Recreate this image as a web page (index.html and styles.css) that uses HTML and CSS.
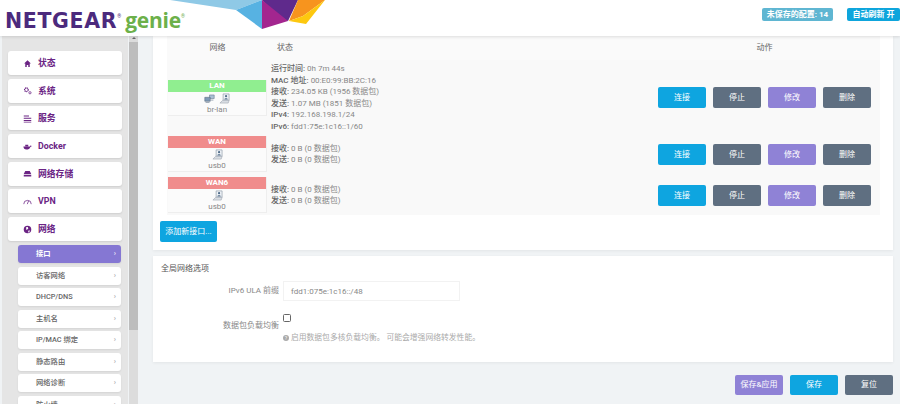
FILE: index.html
```html
<!DOCTYPE html>
<html lang="zh">
<head>
<meta charset="utf-8">
<title>NETGEAR genie</title>
<link rel="stylesheet" href="styles.css">
</head>
<body>
<svg width="0" height="0" class="defs">
  <symbol id="eth" viewBox="0 0 12 12">
    <path d="M4.500 1h6.500v7H4.500z" fill="#eef2f6" stroke="#8a97a6" stroke-width=".7"/>
    <circle cx="7.700" cy="3.500" r="1.200" fill="#4f6b88"/>
    <path d="M5.800 7.200c0-1.900 3.800-1.900 3.800 0z" fill="#4f6b88"/>
    <path d="M1 11l3-3h7l-1 3z" fill="#d8dde3" stroke="#98a2ad" stroke-width=".6"/>
  </symbol>
  <symbol id="br" viewBox="0 0 14 12">
    <path d="M7 1.500h6v4.500H7z" fill="#a9bfd5" stroke="#66788c" stroke-width=".7"/>
    <path d="M1 4.500h7v5H1z" fill="#7f9ab6" stroke="#56677b" stroke-width=".7"/>
    <path d="M2 11h5" stroke="#66788c" stroke-width=".8"/>
    <path d="M9 8h3" stroke="#66788c" stroke-width=".8"/>
  </symbol>
</svg>
<header class="top">
  <div class="logo"><span class="brand">NETGEAR</span><sup class="reg">®</sup><span class="genie">genie</span><sup class="reg green">®</sup></div>
  <svg class="shards" width="180" height="36" viewBox="160 0 180 36">
    <polygon points="170,0 262,0 236,10" fill="#8fc9e6"/>
    <polygon points="236,10 262,0 262,29" fill="#57b2e2"/>
    <polygon points="262,0 298,0 288,21 279,18" fill="#5f2a8c"/>
    <polygon points="262,0 288,21 262,29" fill="#a3268f"/>
    <polygon points="298,0 325,0 303,16 289,21" fill="#f7941e"/>
    <polygon points="325,0 306,24 289,21 303,16" fill="#fdc80f"/>
  </svg>
  <div class="badges">
    <span class="badge unsaved">未保存的配置: 14</span>
    <span class="badge refresh">自动刷新 开</span>
  </div>
</header>
<div class="body">
  <aside class="side">
    <nav class="menu">
      <a class="item"><svg class="ic" viewBox="0 0 12 12"><path d="M6 1.500L1.500 6H3v4.500h2V8h2v2.500h2V6h1.500z"/></svg>状态</a>
      <a class="item"><svg class="ic" viewBox="0 0 12 12"><circle cx="4.500" cy="5" r="2.400" fill="none" stroke="#6b2484" stroke-width="1.600" stroke-dasharray="1.500 .6"/><circle cx="9.300" cy="9" r="1.500" fill="none" stroke="#6b2484" stroke-width="1"/></svg>系统</a>
      <a class="item"><svg class="ic" viewBox="0 0 12 12"><path d="M1 2h7v1.300H1zM1 5h10v1.300H1zM1 8h10v1.300H1zM1 10.300h10v1H1z"/></svg>服务</a>
      <a class="item"><svg class="ic" viewBox="0 0 12 12"><path d="M.5 6h8.500c.6 0 1-.8 1-1.800l1.500 1c-.5 1-1 1.300-1.700 1.400C9 9 7 10 4.500 10 2 10 .8 8.500.5 6zM3 3.500h4v2H3z"/></svg>Docker</a>
      <a class="item"><svg class="ic" viewBox="0 0 12 12"><path d="M3 2.500h6l2 4H1zM1 7.500h10v2.500H1z"/></svg>网络存储</a>
      <a class="item"><svg class="ic" viewBox="0 0 12 12"><path d="M1 9.500a5 5 0 0 1 10 0" fill="none" stroke="#6b2484" stroke-width="1"/><path d="M5.700 9.500L7.500 5" stroke="#6b2484" stroke-width="1"/></svg>VPN</a>
      <a class="item"><svg class="ic" viewBox="0 0 12 12"><circle cx="6" cy="6" r="5"/><path d="M4 3l2.500-.5L7 5 4.500 6.500zM7 7.500l2-.5-.5 2.500-1.500.5z" fill="#fff"/></svg>网络</a>
    </nav>
    <ul class="sub">
      <li class="sub-item active">接口<i>›</i></li>
      <li class="sub-item">访客网络<i>›</i></li>
      <li class="sub-item">DHCP/DNS<i>›</i></li>
      <li class="sub-item">主机名<i>›</i></li>
      <li class="sub-item">IP/MAC 绑定<i>›</i></li>
      <li class="sub-item">静态路由<i>›</i></li>
      <li class="sub-item">网络诊断<i>›</i></li>
      <li class="sub-item">防火墙<i>›</i></li>
    </ul>
  </aside>
  <div class="scroll"><span class="arrow"></span><span class="thumb"></span></div>
  <main class="main">
    <section class="panel first">
      <div class="table">
        <div class="row head">
          <div class="c-net">网络</div>
          <div class="c-stat">状态</div>
          <div class="c-act">动作</div>
        </div>
        <div class="row lan">
          <div class="c-net">
            <div class="ifbox">
              <div class="iflabel green-l">LAN</div>
              <div class="ificons"><svg class="if"><use href="#br"/></svg><svg class="if"><use href="#eth"/></svg></div>
              <div class="ifname">br-lan</div>
            </div>
          </div>
          <div class="c-stat">
            <div><b>运行时间:</b> 0h 7m 44s</div>
            <div><b>MAC 地址:</b> 00:E0:99:BB:2C:16</div>
            <div><b>接收:</b> 234.05 KB (1956 数据包)</div>
            <div><b>发送:</b> 1.07 MB (1851 数据包)</div>
            <div><b>IPv4:</b> 192.168.198.1/24</div>
            <div><b>IPv6:</b> fdd1:75e:1c16::1/60</div>
          </div>
          <div class="c-act"><a class="btn blue">连接</a><a class="btn slate">停止</a><a class="btn purple">修改</a><a class="btn slate">删除</a></div>
        </div>
        <div class="row wan">
          <div class="c-net">
            <div class="ifbox">
              <div class="iflabel red-l">WAN</div>
              <div class="ificons"><svg class="if"><use href="#eth"/></svg></div>
              <div class="ifname">usb0</div>
            </div>
          </div>
          <div class="c-stat">
            <div><b>接收:</b> 0 B (0 数据包)</div>
            <div><b>发送:</b> 0 B (0 数据包)</div>
          </div>
          <div class="c-act"><a class="btn blue">连接</a><a class="btn slate">停止</a><a class="btn purple">修改</a><a class="btn slate">删除</a></div>
        </div>
        <div class="row wan6">
          <div class="c-net">
            <div class="ifbox">
              <div class="iflabel red-l">WAN6</div>
              <div class="ificons"><svg class="if"><use href="#eth"/></svg></div>
              <div class="ifname">usb0</div>
            </div>
          </div>
          <div class="c-stat">
            <div><b>接收:</b> 0 B (0 数据包)</div>
            <div><b>发送:</b> 0 B (0 数据包)</div>
          </div>
          <div class="c-act"><a class="btn blue">连接</a><a class="btn slate">停止</a><a class="btn purple">修改</a><a class="btn slate">删除</a></div>
        </div>
      </div>
      <a class="btn blue add">添加新接口...</a>
    </section>
    <section class="panel second">
      <h3 class="title">全局网络选项</h3>
      <div class="field">
        <label class="lbl">IPv6 ULA 前缀</label>
        <div class="input">fdd1:075e:1c16::/48</div>
      </div>
      <div class="field check">
        <label class="lbl">数据包负载均衡</label>
        <div>
          <span class="box"></span>
          <p class="hint"><span class="q">?</span> 启用数据包多核负载均衡。 可能会增强网络转发性能。</p>
        </div>
      </div>
    </section>
    <div class="actions"><a class="btn purple">保存&amp;应用</a><a class="btn blue">保存</a><a class="btn slate">复位</a></div>
  </main>
</div>
</body>
</html>
```
FILE: styles.css
```css
* { box-sizing: border-box; }
html, body { margin: 0; height: 404px; overflow: hidden; }
body {
  background: #f0f3f5;
  color: #777;
  font: 8px/11.500px Roboto, "Noto Sans CJK SC", sans-serif;
}
.defs { position: absolute; }
.top {
  position: relative;
  height: 36px;
  background: #fff;
  box-shadow: 0 1px 3px rgba(0,0,0,.12);
  display: flex;
  align-items: flex-start;
  justify-content: space-between;
  z-index: 2;
  overflow: hidden;
}
.logo { display: flex; align-items: baseline; padding: 9px 0 0 5px; line-height: 22px; white-space: nowrap; }
.brand { font: 700 20.500px/22px "DejaVu Sans", sans-serif; color: #4c2a7d; letter-spacing: .65px; }
.genie { font: 700 21px/22px "Open Sans", sans-serif; color: #6cb04a; margin-left: 4px; letter-spacing: -.2px; }
.reg { font-size: 5px; line-height: 1; color: #4c2a7d; align-self: flex-start; margin-top: 5px; }
.reg.green { color: #6cb04a; }
.shards { position: absolute; left: 160px; top: 0; }
.badges { display: flex; gap: 14px; padding-top: 8px; }
.badge {
  height: 13px;
  border-radius: 2px; color: #fff;
  text-align: center; white-space: nowrap;
  font: 700 8px/13px Roboto, "Noto Sans CJK SC", sans-serif;
}
.unsaved { background: #5fb6d2; width: 71px; }
.refresh { background: #0ea5dc; width: 53px; }

.body { display: flex; height: 368px; overflow: hidden; }
.side {
  width: 126px; margin-left: 2px; height: 368px; overflow: hidden;
  background: #e5e5e5;
  padding: 15px 6px 0;
  flex: none;
}
.menu { display: flex; flex-direction: column; gap: 3.700px; }
.item {
  display: flex; align-items: center;
  height: 24px; padding-left: 15px;
  background: #fff; border-radius: 3px;
  color: #6b2484;
  font: 700 8.800px/24px Roboto, "Noto Sans CJK SC", sans-serif;
  box-shadow: 0 1px 2px rgba(0,0,0,.1);
}
.ic { width: 9px; height: 9px; margin-right: 6px; fill: #6b2484; flex: none; }
.sub { list-style: none; margin: 4px 0 0; padding: 0 1px 0 10px; display: flex; flex-direction: column; gap: 3.500px; }
.sub-item {
  display: flex; justify-content: space-between;
  height: 18px; padding: 0 5px 0 18px;
  background: #fff; border-radius: 3px;
  color: #666;
  font: 500 7.300px/18px Roboto, "Noto Sans CJK SC", sans-serif;
  box-shadow: 0 1px 2px rgba(0,0,0,.08);
}
.sub-item i { font-style: normal; font-weight: 400; color: #999; }
.sub-item.active { background: #8577d3; color: #fff; font-weight: 700; }
.sub-item.active i { color: #fff; }
.scroll {
  position: relative;
  width: 9px; margin-left: 1px; background: #dcdcdc; flex: none;
}
.thumb { position: absolute; left: 0; right: 0; top: 6px; height: 288px; background: #bdbdbd; }
.arrow {
  position: absolute; left: 2.500px; top: 1px;
  border: 2px solid transparent; border-bottom: 2.500px solid #666; border-top: 0;
}
.main { flex: 1; padding: 0 7px 0 15px; min-width: 0; }
.panel { background: #fff; box-shadow: 0 1px 3px rgba(0,0,0,.06); }
.first { height: 214px; padding: 0 7px 0 14px; }
.table { background: #f9f9f9; width: 713px; height: 179px; }
.row { display: flex; }
.head { height: 24px; line-height: 24px; background: #fafafa; }
.lan { height: 75px; align-items: center; }
.wan { height: 38px; align-items: center; }
.wan6 { height: 42px; align-items: center; padding-top: 2px; }
.c-net { width: 100px; padding-left: 1px; text-align: center; flex: none; }
.c-stat { width: 391px; padding-left: 4px; flex: none; color: #888; }
.head .c-net, .head .c-stat { color: #666; }
.head .c-stat { padding-left: 10px; }
.head .c-act { width: 213px; justify-content: center; color: #666; }
.c-stat b { color: #666; font-weight: 500; }
.c-act { display: flex; gap: 7px; }
.ifbox { background: #fbfbfb; border-bottom: 1px solid #eee; border-right: 1px solid #eee; }
.iflabel { height: 12px; line-height: 12px; color: #fff; font-weight: 700; }
.green-l { background: #90ee90; }
.red-l { background: #f08c8c; }
.ificons { display: flex; justify-content: center; gap: 4px; height: 13px; padding-top: 1px; }
.if { width: 11px; height: 11px; }
.ifname { line-height: 10px; height: 10px; color: #888; }
.btn {
  display: block;
  width: 48px; height: 21px;
  border-radius: 2px;
  color: #fff; text-align: center;
  font: 8px/21px Roboto, "Noto Sans CJK SC", sans-serif;
}
.blue { background: #0ea5e0; }
.slate { background: #5f6f81; }
.purple { background: #8f82d6; }
.add { width: 57px; margin: 6px 0 0 -7px; }
.second { height: 106px; margin-top: 6px; padding: 7px 8px; }
.title { margin: 0; font: 400 8px/11px Roboto, "Noto Sans CJK SC", sans-serif; color: #555; }
.field { display: flex; align-items: center; margin-top: 7px; }
.lbl { width: 122px; padding-right: 4px; text-align: right; color: #888; flex: none; font-size: 8px; }
.input {
  width: 177px; height: 20px;
  border: 1px solid #f2f2f2; padding-left: 7px;
  line-height: 19px; color: #888;
}
.check { align-items: flex-start; margin-top: 8px; }
.check .lbl { padding-top: 11px; }
.box { display: block; width: 8px; height: 8px; border: 1px solid #666; border-radius: 1.500px; margin-top: 5px; }
.hint { margin: 10px 0 0; color: #aaa; font-size: 7.800px; white-space: nowrap; }
.q {
  display: inline-block; width: 6px; height: 6px; border-radius: 50%;
  background: #aaa; color: #fff; font-size: 5px; line-height: 6px; text-align: center;
}
.actions { display: flex; justify-content: flex-end; gap: 7px; margin-top: 13px; }
.actions .btn { height: 20px; line-height: 20px; }
```
